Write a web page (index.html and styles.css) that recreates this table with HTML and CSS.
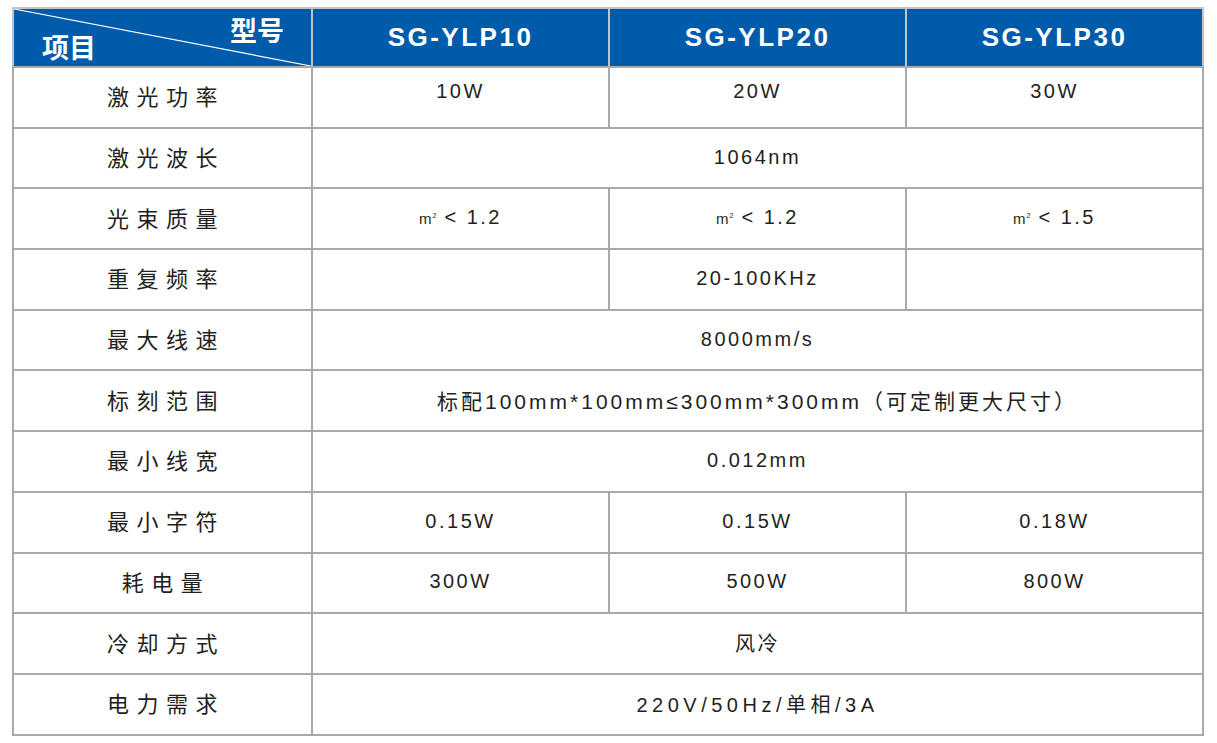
FILE: index.html
```html
<!DOCTYPE html>
<html lang="zh-CN">
<head>
<meta charset="utf-8">
<title>SG-YLP 参数表</title>
<link rel="stylesheet" href="styles.css">
</head>
<body>
<div class="page">
<table class="spec">
  <colgroup>
    <col class="c-label"><col class="c-val"><col class="c-val"><col class="c-val">
  </colgroup>
  <thead>
    <tr class="head">
      <th class="corner">
        <svg class="diag" viewBox="0 0 100 100" preserveAspectRatio="none"><line x1="0" y1="0" x2="100" y2="100" stroke="#ffffff" stroke-width="1.2" vector-effect="non-scaling-stroke"/></svg>
        <span class="xh">型号</span>
        <span class="yh">项目</span>
      </th>
      <th>SG-YLP10</th>
      <th>SG-YLP20</th>
      <th>SG-YLP30</th>
    </tr>
  </thead>
  <tbody>
    <tr><td class="lbl">激光功率</td><td class="v raise">10W</td><td class="v raise">20W</td><td class="v raise">30W</td></tr>
    <tr><td class="lbl">激光波长</td><td class="v" colspan="3">1064nm</td></tr>
    <tr><td class="lbl">光束质量</td><td class="v"><span class="m">m<sup>2</sup></span> &lt; 1.2</td><td class="v"><span class="m">m<sup>2</sup></span> &lt; 1.2</td><td class="v"><span class="m">m<sup>2</sup></span> &lt; 1.5</td></tr>
    <tr><td class="lbl">重复频率</td><td class="v"></td><td class="v">20-100KHz</td><td class="v"></td></tr>
    <tr><td class="lbl">最大线速</td><td class="v" colspan="3">8000mm/s</td></tr>
    <tr><td class="lbl">标刻范围</td><td class="v tight" colspan="3">标配100mm*100mm≤300mm*300mm（可定制更大尺寸）</td></tr>
    <tr><td class="lbl">最小线宽</td><td class="v" colspan="3">0.012mm</td></tr>
    <tr><td class="lbl">最小字符</td><td class="v">0.15W</td><td class="v">0.15W</td><td class="v">0.18W</td></tr>
    <tr><td class="lbl">耗电量</td><td class="v">300W</td><td class="v">500W</td><td class="v">800W</td></tr>
    <tr><td class="lbl">冷却方式</td><td class="v" colspan="3">风冷</td></tr>
    <tr><td class="lbl">电力需求</td><td class="v wide" colspan="3">220V/50Hz/单相/3A</td></tr>
  </tbody>
</table>
</div>
</body>
</html>
```

FILE: styles.css
```css
html, body {
  margin: 0;
  padding: 0;
  background: #ffffff;
}

.page {
  padding: 7px 0 0 12px;
}

.spec {
  border-collapse: collapse;
  table-layout: fixed;
  width: 1192px;
  font-family: "Liberation Sans", "Noto Sans CJK SC", sans-serif;
  color: #231f20;
}

.c-label { width: 299px; }
.c-val { width: 297px; }

.spec th,
.spec td {
  border: 2px solid #a9a9a9;
  padding: 0;
  text-align: center;
  vertical-align: middle;
}

.head th {
  height: 57px;
  background: #005bab;
  color: #ffffff;
  font-family: "Liberation Sans", "Noto Sans CJK SC", sans-serif;
  font-weight: 700;
  font-size: 26px;
  letter-spacing: 2.5px;
  border-color: #c4c4c4;
  border-bottom-color: #a9a9a9;
}

.head th.corner {
  position: relative;
  letter-spacing: 0;
}

.diag {
  position: absolute;
  left: 0;
  top: 0;
  width: 100%;
  height: 100%;
  display: block;
}

.xh,
.yh {
  position: absolute;
  font-family: "Noto Sans CJK SC", sans-serif;
  font-weight: 700;
  font-size: 27px;
  line-height: 1;
}

.xh { right: 27px; top: 7px; }
.yh { left: 28px; top: 24px; }

.spec tbody tr {
  height: 60.7px;
}

.lbl {
  font-family: "Noto Sans CJK SC", sans-serif;
  font-weight: 400;
  font-size: 22px;
  letter-spacing: 7.5px;
  padding-left: 7px !important;
  padding-bottom: 4px !important;
}

.v {
  font-size: 20px;
  letter-spacing: 2.5px;
  padding-bottom: 2px !important;
}

.v.raise {
  padding-bottom: 12px !important;
}

.v.tight {
  font-size: 21px;
  letter-spacing: 3px;
}

.v.wide {
  letter-spacing: 4.5px;
}

.m {
  font-size: 15px;
  letter-spacing: 0;
}

.m sup {
  font-size: 7px;
  vertical-align: 6px;
  margin-left: 1px;
}
```
